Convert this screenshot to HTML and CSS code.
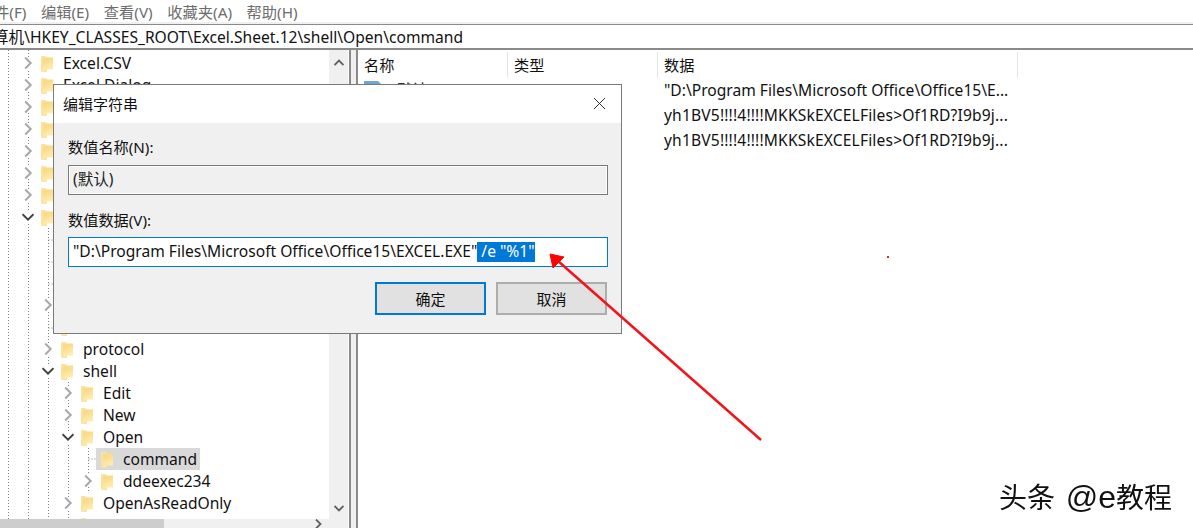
FILE: index.html
```html
<!DOCTYPE html>
<html lang="zh">
<head>
<meta charset="utf-8">
<title>注册表编辑器</title>
<link rel="stylesheet" href="styles.css">
</head>
<body>
<svg class="defs" width="0" height="0" aria-hidden="true">
  <defs>
    <linearGradient id="fg" x1="0" y1="0" x2="0.3" y2="1"><stop offset="0" stop-color="#f8d272"/><stop offset="1" stop-color="#feeeb4"/></linearGradient>
    <symbol id="fold" viewBox="0 0 12 17"><path d="M0 1.5L1 1h3l2 1v15H1L0 16z" fill="#fae3a0"/><path d="M2 3.500h4V1.500L6 2.500h6v12H6l-4 2z" fill="url(#fg)"/></symbol>
    <symbol id="cr" viewBox="0 0 12 12"><path d="M3.200.5L8.700 6l-5.500 5.500"/></symbol>
    <symbol id="cd" viewBox="0 0 12 12"><path d="M.5 3.200L6 8.700l5.500-5.500"/></symbol>
  </defs>
</svg>
<div class="app">
  <div class="menu">
    <span class="menu-first">件(F)</span><span>编辑(E)</span><span>查看(V)</span><span>收藏夹(A)</span><span>帮助(H)</span>
  </div>
  <div class="address"><span class="address-text">算机\HKEY_CLASSES_ROOT\Excel.Sheet.12\shell\Open\command</span></div>
  <div class="main">
    <div class="tree-pane">
      <div class="tree">
        <svg class="guides" width="330" height="478" aria-hidden="true">
          <path d="M8.500 0V478M28.500 0V478M48.500 178V478M68.500 332V478M88.500 398V442M88.500 409H96M48.500 190H54M48.500 212H54M48.500 234H54M48.500 278H54" stroke="#808080" stroke-dasharray="1 2" fill="none"/>
        </svg>
        <div class="row l0"><svg class="chev"><use href="#cr"/></svg><svg class="folder"><use href="#fold"/></svg><span>Excel.CSV</span></div>
        <div class="row l0"><svg class="chev"><use href="#cr"/></svg><svg class="folder"><use href="#fold"/></svg><span>Excel.Dialog</span></div>
        <div class="row l0"><svg class="chev"><use href="#cr"/></svg><svg class="folder"><use href="#fold"/></svg></div>
        <div class="row l0"><svg class="chev"><use href="#cr"/></svg><svg class="folder"><use href="#fold"/></svg></div>
        <div class="row l0"><svg class="chev"><use href="#cr"/></svg><svg class="folder"><use href="#fold"/></svg></div>
        <div class="row l0"><svg class="chev"><use href="#cr"/></svg><svg class="folder"><use href="#fold"/></svg></div>
        <div class="row l0"><svg class="chev"><use href="#cr"/></svg><svg class="folder"><use href="#fold"/></svg></div>
        <div class="row l0"><svg class="chev open"><use href="#cd"/></svg><svg class="folder"><use href="#fold"/></svg></div>
        <div class="row l1"></div>
        <div class="row l1"></div>
        <div class="row l1"></div>
        <div class="row l1"><svg class="chev"><use href="#cr"/></svg></div>
        <div class="row l1"><i class="chev-space"></i><svg class="folder"><use href="#fold"/></svg><span>InsertTable</span></div>
        <div class="row l1"><svg class="chev"><use href="#cr"/></svg><svg class="folder"><use href="#fold"/></svg><span>protocol</span></div>
        <div class="row l1"><svg class="chev open"><use href="#cd"/></svg><svg class="folder"><use href="#fold"/></svg><span>shell</span></div>
        <div class="row l2"><svg class="chev"><use href="#cr"/></svg><svg class="folder"><use href="#fold"/></svg><span>Edit</span></div>
        <div class="row l2"><svg class="chev"><use href="#cr"/></svg><svg class="folder"><use href="#fold"/></svg><span>New</span></div>
        <div class="row l2"><svg class="chev open"><use href="#cd"/></svg><svg class="folder"><use href="#fold"/></svg><span>Open</span></div>
        <div class="row l3"><i class="chev-space"></i><span class="selected"><svg class="folder"><use href="#fold"/></svg><span>command</span></span></div>
        <div class="row l3"><svg class="chev"><use href="#cr"/></svg><svg class="folder"><use href="#fold"/></svg><span>ddeexec234</span></div>
        <div class="row l2"><svg class="chev"><use href="#cr"/></svg><svg class="folder"><use href="#fold"/></svg><span>OpenAsReadOnly</span></div>
        <div class="row l2"><i class="chev-space"></i><svg class="folder"><use href="#fold"/></svg></div>
      </div>
      <div class="vscroll">
        <svg class="sb-arrow" viewBox="0 0 10 10"><path d="M.5 7L5 2.500 9.500 7"/></svg>
        <svg class="sb-arrow" viewBox="0 0 10 10"><path d="M.5 3L5 7.500 9.500 3"/></svg>
      </div>
      <div class="hscroll"><div class="hthumb"></div><svg class="sb-arrow" viewBox="0 0 10 10"><path d="M3 .5L7.500 5 3 9.500"/></svg></div>
    </div>
    <div class="splitter"></div>
    <div class="list">
      <div class="list-head">
        <div class="col c1">名称</div><div class="col c2">类型</div><div class="col c3">数据</div>
      </div>
      <div class="list-row"><div class="cell c1"><svg class="regicon" viewBox="0 0 20 18"><path d="M0 0h14l4 4v14H0z" fill="#6ea6d8"/></svg>(默认)</div><div class="cell c2">REG_SZ</div><div class="cell c3">"D:\Program Files\Microsoft Office\Office15\E...</div></div>
      <div class="list-row"><div class="cell c1"></div><div class="cell c2"></div><div class="cell c3 spaced">yh1BV5!!!!4!!!!MKKSkEXCELFiles&gt;Of1RD?I9b9j...</div></div>
      <div class="list-row"><div class="cell c1"></div><div class="cell c2"></div><div class="cell c3 spaced">yh1BV5!!!!4!!!!MKKSkEXCELFiles&gt;Of1RD?I9b9j...</div></div>
    </div>
  </div>
</div>

<div class="dialog">
  <div class="dialog-title"><span>编辑字符串</span>
    <svg class="close" viewBox="0 0 14 14"><path d="M1 1l12 12M13 1L1 13"/></svg>
  </div>
  <div class="dialog-body">
    <div class="field-label">数值名称(N):</div>
    <div class="input readonly">(默认)</div>
    <div class="field-label second">数值数据(V):</div>
    <div class="input active">"D:\Program Files\Microsoft Office\Office15\EXCEL.EXE"<span class="sel"> /e "%1"</span></div>
    <div class="buttons">
      <div class="btn primary">确定</div>
      <div class="btn">取消</div>
    </div>
  </div>
</div>

<svg class="annotation" width="1193" height="528" aria-hidden="true">
  <path d="M761 440L558 261" stroke="#f2141c" stroke-width="2.500" fill="none"/>
  <path d="M550 254L564 257L553 268z" fill="#ff0000" stroke="#ff0000" stroke-width="1"/>
  <rect x="887" y="256" width="2" height="2" fill="#e8202a"/>
</svg>
<div class="watermark">头条 <span class="wm-latin">@e</span>教程</div>
</body>
</html>
```
FILE: styles.css
```css
* { box-sizing: border-box; }
html, body { margin: 0; padding: 0; }
body {
  width: 1193px; height: 528px; overflow: hidden; background: #fff; position: relative;
  font-family: "Noto Sans", "Noto Sans CJK SC", sans-serif;
  font-size: 15.6px; color: #111;
}
.defs { position: absolute; }
.app { display: flex; flex-direction: column; height: 528px; }
.menu {
  height: 24px; flex: none; display: flex; align-items: center; gap: 14.5px;
  color: #6d6d6d; overflow: hidden; white-space: nowrap; font-size: 15.3px;
  border-bottom: 2px solid #f0f0f0; padding-bottom: 1px;
}
.menu-first { margin-left: -6px; }
.address {
  height: 26px; flex: none; border-top: 1px solid #8a8a8a; border-bottom: 2px solid #8a8a8a;
  overflow: hidden; white-space: nowrap; line-height: 25px;
}
.address-text { display: block; margin-left: -7px; }
.main { flex: 1; display: flex; min-height: 0; }
.tree-pane {
  width: 349px; flex: none; display: grid; position: relative;
  grid-template-columns: 329px 20px; grid-template-rows: 469px 9px;
}
.tree { padding-top: 2px; position: relative; overflow: hidden; }
.guides { position: absolute; left: 0; top: 0; }
.row { height: 22px; display: flex; align-items: center; position: relative; white-space: nowrap; }
.l0 { padding-left: 22px; }
.l1 { padding-left: 42px; }
.l2 { padding-left: 62px; }
.l3 { padding-left: 82px; }
.chev { width: 12px; height: 12px; flex: none; fill: none; stroke: #a8a8a8; stroke-width: 2; background: #fff; }
.chev.open { stroke: #404040; }
.chev-space { width: 12px; flex: none; }
.folder { width: 12px; height: 17px; flex: none; margin-left: 7px; margin-right: 10px; background: #fff; }
.selected { display: flex; align-items: center; background: #d9d9d9; height: 22px; margin-left: 2px; padding: 0 0 0 5px; width: 104px; }
.selected .folder { background: none; margin-left: 0; }
.vscroll {
  background: #f0f0f0; grid-row: 1 / 3; grid-column: 2; display: flex; flex-direction: column;
  justify-content: space-between; padding: 8px 0 15px; align-items: center; width: 19px;
}
.sb-arrow { width: 10px; height: 10px; fill: none; stroke: #606060; stroke-width: 1.8; flex: none; }
.hscroll { background: #f0f0f0; display: flex; justify-content: space-between; overflow: hidden; padding-right: 6px; }
.hthumb { width: 164px; height: 100%; background: #cdcdcd; }
.splitter { width: 9px; flex: none; background: #f0f0f0; border-left: 2px solid #8a8a8a; border-right: 2px solid #8a8a8a; }
.list { flex: 1; min-width: 0; }
.list-head { display: flex; height: 27px; align-items: flex-start; padding-top: 2px; }
.col { border-right: 1px solid #e5e5e5; height: 26px; padding-left: 6px; line-height: 26px; font-size: 15.2px; }
.c1 { width: 150px; flex: none; }
.c2 { width: 150px; flex: none; }
.c3 { width: 360px; flex: none; }
.list-row { display: flex; height: 25px; align-items: center; white-space: nowrap; }
.cell { padding-left: 6px; display: flex; align-items: center; }
.spaced { letter-spacing: 0.16px; }
.regicon { width: 20px; height: 18px; margin-right: 8px; flex: none; }
.dialog {
  position: absolute; left: 53px; top: 84px; width: 569px; height: 250px;
  border: 1px solid #7a7a7a; background: #f0f0f0; display: flex; flex-direction: column;
}
.dialog-title {
  height: 38px; flex: none; background: #fff; display: flex; align-items: center;
  justify-content: space-between; padding: 0 15px 2px 9px; font-size: 15px;
}
.close { width: 13px; height: 13px; fill: none; stroke: #222; stroke-width: 1; }
.dialog-body { padding: 14px 13px 0 14px; flex: 1; }
.field-label { height: 20px; line-height: 20px; font-size: 15.2px; }
.field-label.second { margin-top: 15px; }
.input {
  height: 30px; width: 540px; margin-top: 8px; padding-left: 4px; border: 1px solid #7a7a7a;
  line-height: 27px; white-space: pre;
}
.input.readonly { background: #f0f0f0; box-shadow: inset 0 0 0 1px #fff; color: #222; }
.input.active { margin-top: 7px; background: #fff; border-color: #0078d7; }
.sel { background: #0078d7; color: #fff; display: inline-block; height: 20px; line-height: 19px; }
.buttons { display: flex; justify-content: flex-end; gap: 10px; margin-top: 15px; width: 539px; }
.btn {
  width: 111px; height: 33px; display: flex; align-items: center; justify-content: center;
  background: #e1e1e1; border: 2px solid #adadad; font-size: 15px;
}
.btn.primary { border-color: #0078d7; }
.annotation { position: absolute; left: 0; top: 0; pointer-events: none; }
.watermark {
  position: absolute; left: 999px; top: 478px; font-size: 28px; line-height: 38px; color: #111;
  font-family: "Liberation Sans", "Noto Sans CJK SC", sans-serif; white-space: nowrap; filter: blur(0.35px);
}
.wm-latin { font-size: 32px; margin-left: 3px; }
```
